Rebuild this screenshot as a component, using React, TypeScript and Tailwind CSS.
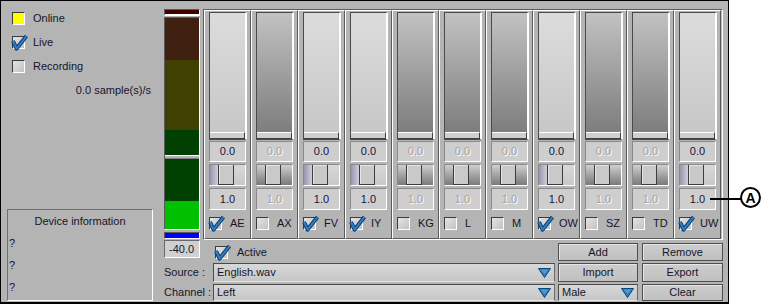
const strips = [
  { name: "AE", on: true },
  { name: "AX", on: false },
  { name: "FV", on: true },
  { name: "IY", on: true },
  { name: "KG", on: false },
  { name: "L", on: false },
  { name: "M", on: false },
  { name: "OW", on: true },
  { name: "SZ", on: false },
  { name: "TD", on: false },
  { name: "UW", on: true },
];

function Check({ checked, yellow }: { checked?: boolean; yellow?: boolean }) {
  return (
    <span
      className={`relative block w-[13px] h-[13px] shrink-0 border border-[#3c3c3c] border-r-white border-b-white ${
        yellow ? "bg-[#ffff00]" : "bg-linear-to-br from-[#e4e4e4] to-[#c2c2c2]"
      }`}
    >
      {checked && (
        <svg className="absolute left-[-2px] top-[-3px]" width="17" height="17" viewBox="0 0 17 17">
          <path d="M2 7 L5.6 14.6 L15.5 2" fill="none" stroke="#0c3d6e" strokeWidth="4" strokeLinejoin="round" />
          <path d="M2 7 L5.6 14.6 L15.5 2" fill="none" stroke="#2f7fc6" strokeWidth="2" strokeLinejoin="round" />
        </svg>
      )}
    </span>
  );
}

function Arrow() {
  return (
    <svg width="13" height="10" viewBox="0 0 13 10" className="shrink-0">
      <path d="M0.5 0.5 H12.5 L6.5 9.5 Z" fill="#2c7bbd" stroke="#0f4573" strokeWidth="1" />
      <path d="M2.5 1.5 H10.5 L6.5 6 Z" fill="#4f9ad6" />
    </svg>
  );
}

function Dropdown({ text, w }: { text: string; w: string }) {
  return (
    <div
      className={`${w} h-full flex items-center justify-between pl-[3px] pr-[3px] border border-[#4a4a4a] border-b-[#e8e8e8] border-r-[#6a6a6a] bg-linear-to-b from-[#d8d8d8] to-[#c6c6c6]`}
    >
      <span>{text}</span>
      <Arrow />
    </div>
  );
}

function Button({ label, w }: { label: string; w: string }) {
  return (
    <div
      className={`${w} h-full flex items-center justify-center border border-[#4e4e4e] bg-linear-to-b from-[#cdcdcd] to-[#c0c0c0] shadow-[inset_1px_1px_0_#e6e6e6]`}
    >
      {label}
    </div>
  );
}

function Strip({ name, on }: { name: string; on: boolean }) {
  const num = on ? "text-[#14143a]" : "text-[#a2a2a2] [text-shadow:1px_1px_0_#ffffff]";
  const side = on
    ? "bg-linear-to-b from-[#d8d8d8] to-[#c8c8c8]"
    : "bg-linear-to-b from-[#cfcfcf] to-[#7a7a7a]";
  return (
    <div className="w-[47px] h-full shrink-0 border-t border-l border-white border-r border-r-[#5a5a5a] border-b border-b-[#5a5a5a] pl-[4px] pt-[1px] flex flex-col">
      <div
        className={`w-[38px] h-[128px] flex flex-col justify-end border border-[#4a4a4a] border-r-2 border-r-white ${
          on ? "bg-linear-to-b from-[#dcdcdc] to-[#c6c6c6]" : "bg-linear-to-b from-[#c2c2c2] to-[#7a7a7a]"
        }`}
      >
        <div className="h-[7px] border-t border-white border-r border-r-[#404040] border-b border-b-[#404040] bg-[#cfcfcf]" />
      </div>
      <div
        className={`mt-[1px] w-[37px] h-[21px] flex items-center justify-center border border-[#8a8a8a] border-r-white border-b-white bg-[#cecece] ${num}`}
      >
        0.0
      </div>
      <div className="mt-[2px] w-[37px] h-[22px] flex border border-[#8a8a8a] border-r-white border-b-white">
        <div className={`w-[8px] h-full ${on ? "bg-linear-to-r from-[#9696b2] to-[#cfcfd6]" : side}`} />
        <div className="w-[16px] h-full border-l border-r border-b border-[#3c3c3c] border-t-0 bg-[#c9c9c9] shadow-[inset_1px_1px_0_#e4e4e4]" />
        <div className={`flex-1 h-full ${side}`} />
      </div>
      <div
        className={`mt-[2px] w-[37px] h-[22px] flex items-center justify-center border border-[#8a8a8a] border-r-white border-b-white bg-[#cecece] ${num}`}
      >
        1.0
      </div>
      <div className="mt-[7px] h-[13px] flex items-center">
        <Check checked={on} />
        <span className="ml-[8px]">{name}</span>
      </div>
    </div>
  );
}

export default function App() {
  return (
    <div className="relative w-[763px] h-[305px] bg-white font-['Liberation_Sans',Arial,sans-serif] text-[11px] text-[#15152a] leading-[13px]">
      <div className="w-[729px] h-[304px] border border-black border-b-2 bg-[#b4b4b4] flex">
        {/* left panel */}
        <div className="w-[157px] h-full flex flex-col pt-[11px]">
          <div className="pl-[11px] flex flex-col gap-[11px]">
            <div className="h-[13px] flex items-center">
              <Check yellow />
              <span className="ml-[8px]">Online</span>
            </div>
            <div className="h-[13px] flex items-center">
              <Check checked />
              <span className="ml-[8px]">Live</span>
            </div>
            <div className="h-[13px] flex items-center">
              <Check />
              <span className="ml-[8px]">Recording</span>
            </div>
          </div>
          <div className="mt-[11px] pr-[7px] text-right">0.0 sample(s)/s</div>
          <div className="mt-auto mb-[1px] ml-[6px] w-[146px] h-[92px] border border-[#707070] border-r-white border-b-white">
            <div className="h-[22px] leading-[22px] text-center">Device information</div>
            <div className="h-[22px] leading-[22px] pl-[1px] text-[#2a0c3a]">?</div>
            <div className="h-[22px] leading-[22px] pl-[1px] text-[#2a0c3a]">?</div>
            <div className="h-[22px] leading-[22px] pl-[1px] text-[#2a0c3a]">?</div>
          </div>
        </div>

        {/* right panel */}
        <div className="flex-1 pl-[6px] pt-[8px] flex flex-col">
          <div className="flex gap-[3px]">
            <div className="w-[36px] flex flex-col">
              <div className="h-[7px] border border-[#5a5a5a] border-r-white border-b-2 border-b-white bg-[#400000]" />
              <div className="mt-[1px] h-[213px] border border-[#5a5a5a] border-r-white border-b-white flex flex-col">
                <div className="h-[42px] bg-[#402010]" />
                <div className="h-[70px] bg-[#404000]" />
                <div className="h-[25px] bg-[#004000]" />
                <div className="h-[4px] bg-[#b4b4b4] border-t border-white border-b border-b-[#808080]" />
                <div className="h-[42px] bg-[#004000]" />
                <div className="flex-1 bg-[#00c000]" />
              </div>
              <div className="mt-[2px] h-[7px] border border-[#5a5a5a] border-r-white border-b-white bg-[#0000ff]" />
              <div className="mt-[1px] h-[18px] pl-[4px] flex items-center border border-[#6a6a6a] border-r-white border-b-white bg-[#d0d0d0]">
                -40.0
              </div>
            </div>

            <div className="flex flex-col">
              <div className="h-[231px] flex border-t border-l border-[#5c5c5c] border-r border-r-white border-b border-b-white">
                {strips.map((s) => (
                  <Strip key={s.name} name={s.name} on={s.on} />
                ))}
              </div>
              <div className="mt-[3px] h-[18px] flex">
                <div className="w-[355px] pl-[12px] flex items-center">
                  <Check checked />
                  <span className="ml-[9px]">Active</span>
                </div>
                <Button label="Add" w="w-[80px]" />
                <div className="w-[4px]" />
                <Button label="Remove" w="w-[81px]" />
              </div>
            </div>
          </div>

          <div className="mt-[2px] h-[19px] flex items-center">
            <span className="w-[49px]">Source :</span>
            <Dropdown text="English.wav" w="w-[342px]" />
            <div className="w-[3px]" />
            <Button label="Import" w="w-[80px]" />
            <div className="w-[4px]" />
            <Button label="Export" w="w-[81px]" />
          </div>
          <div className="mt-[2px] h-[17px] flex items-center">
            <span className="w-[49px]">Channel :</span>
            <Dropdown text="Left" w="w-[342px]" />
            <div className="w-[3px]" />
            <Dropdown text="Male" w="w-[80px]" />
            <div className="w-[4px]" />
            <Button label="Clear" w="w-[81px]" />
          </div>
        </div>
      </div>

      {/* callout */}
      <div className="absolute left-[710px] top-[198px] w-[31px] h-[2px] bg-black" />
      <div className="absolute left-[740px] top-[187px] w-[21px] h-[21px] rounded-full border-2 border-black bg-white flex items-center justify-center font-bold text-[14px] text-black leading-none">
        A
      </div>
    </div>
  );
}
